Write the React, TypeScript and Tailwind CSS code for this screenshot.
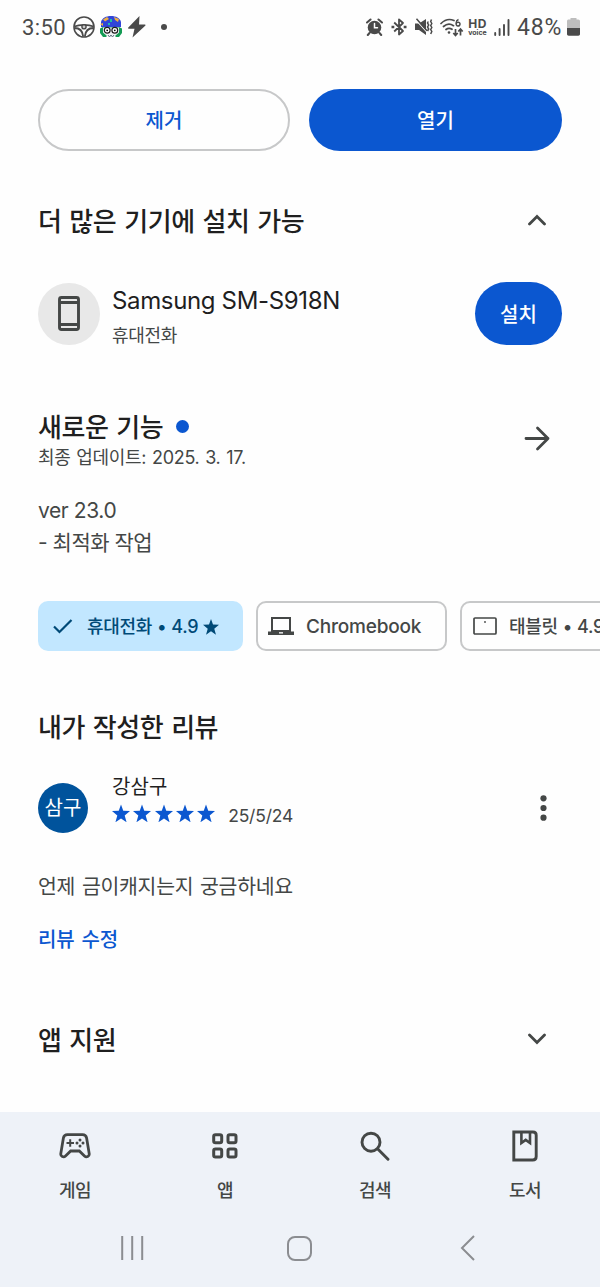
import type { ReactNode } from "react";

const KR = "font-['Noto_Sans_CJK_KR',sans-serif]";
const LATIN = "font-['Inter','Noto_Sans_CJK_KR',sans-serif]";
const STAR = "M12 18 5.800 22.300l2.100-7.600L2 9.900l7.500-.3L12 2.500l2.500 7.100 7.500.3-5.900 4.800 2.100 7.600z";

function StatusBar() {
  return (
    <header className="flex h-[54px] items-center pl-[22px] pr-[20px] text-[#4a4a4a]">
      <span className="w-[51px] pt-[2px] font-['Roboto',sans-serif] text-[22px] leading-[52px] tracking-[0.4px]">3:50</span>
      <svg className="h-[22px] w-[22px]" viewBox="0 0 22 22" fill="none" stroke="currentColor">
        <circle cx="11" cy="11" r="10" strokeWidth="1.600" />
        <path d="M1.500 10.500C5 8.800 8 8.800 11 8.800s6 0 9.500 1.700" strokeWidth="1.800" />
        <path d="M1.500 12c4 0 8 1.500 8.700 8.500M20.500 12c-4 0-8 1.500-8.700 8.500" strokeWidth="1.800" />
        <circle cx="11" cy="10.800" r="2.100" fill="#ccc" strokeWidth="1.400" />
      </svg>
      <svg className="ml-[5px] h-[22px] w-[22px]" viewBox="0 0 22 22">
        <path d="M0 12.500 3 11h16l3 1.500V17l-3 4h-3l-2-2H8l-2 2H3l-3-4z" fill="#149b54" />
        <path d="M1 11V6C2 2 6 0 11 0s9 2 10 6v5z" fill="#3145d8" />
        <path d="M3 3.500 7 1l2 2-4 2.500zM14 1l5 2-1 3-3-2zM0 8l3-1v3z" fill="#edae45" />
        <path d="M10 3h2v3h-2zM8 7h2v2H8z" fill="#21bda7" />
        <path d="M3 11.500h16v5l-4 3.500H7l-4-3.500z" fill="#f0f3f4" />
        <path d="m8 19 1.500 2L11 19l1.500 2 1.500-2" fill="none" stroke="#607080" />
        <circle cx="7.200" cy="14.300" r="2.900" fill="#fff" stroke="#1d1d1d" strokeWidth="1.200" />
        <circle cx="14.800" cy="14.300" r="2.900" fill="#fff" stroke="#1d1d1d" strokeWidth="1.200" />
        <circle cx="7.200" cy="14.300" r=".9" /><circle cx="14.800" cy="14.300" r=".9" />
      </svg>
      <svg className="ml-[6px] h-[22px] w-[18px]" viewBox="0 0 18 22" fill="currentColor">
        <path d="M11.500 0 .3 11.500c-.6.7-.3 1.300.5 1.300h5.700L4.500 21.500 17.200 9.800c.7-.7.400-1.300-.400-1.300H11z" />
      </svg>
      <span className="ml-[15px] h-[6px] w-[6px] rounded-full bg-[#4a4a4a]" />
      <div className="ml-auto flex items-center">
        <svg className="h-[18px] w-[17px]" viewBox="0 0 17 18" fill="none" stroke="currentColor" strokeLinecap="round">
          <circle cx="8.500" cy="9.500" r="6.800" fill="currentColor" stroke="none" />
          <path d="M1 4.500 4.500 1.500M16 4.500 12.500 1.500M3.500 15l-1.700 2M13.500 15l1.700 2" strokeWidth="2" />
          <path d="M8.500 5.500v4.300h3" stroke="#fff" strokeWidth="1.500" />
        </svg>
        <svg className="ml-[8px] h-[18px] w-[16px]" viewBox="0 0 16 18" fill="none" stroke="currentColor" strokeWidth="1.800">
          <path d="M3.200 4.500 12 13l-4 3.500v-15L12 5l-8.800 8.500" strokeLinejoin="round" />
          <path d="M.5 9h2.800M12.700 9h2.800" strokeWidth="2.300" />
        </svg>
        <svg className="ml-[8px] h-[18px] w-[18px]" viewBox="0 0 18 18" fill="none" stroke="currentColor">
          <path d="M0 5.500h4L11 1v16l-7-5H0z" fill="currentColor" stroke="none" />
          <path d="m0 .8 13 14.500" stroke="#fff" strokeWidth="1.200" />
          <path d="m1.500.8 10.500 12" strokeWidth="1.500" />
          <path d="m13.300 3.500-.8 1.500 1.200 2-1.200 2 1.200 2-1.200 2M16.500 1.500l-.8 2 1.100 2-1.100 2 1.100 2-1.100 2 1.100 2-1.100 2.500" strokeWidth="1.500" />
        </svg>
        <svg className="ml-[7px] h-[19px] w-[24px]" viewBox="0 0 24 19" fill="none" stroke="currentColor" strokeWidth="1.700">
          <path d="M1 5.500C5 1.500 10 .8 14 2.500M3.500 8.500c3-2.700 7-3 10-.8M6 11.500c2-1.600 4-1.600 6-.2" strokeLinecap="round" />
          <circle cx="9" cy="14.500" r="1.300" fill="currentColor" stroke="none" />
          <path d="M18.500 1.500c-3 1-3.200 6.500-.6 6.500 3 0 2.500-4 .2-3.800-1.300 0-2 .9-2 2" strokeWidth="1.500" />
          <path d="M15.500 11v6M13.300 15l2.200 2.500 2.200-2.500M20.500 17.500v-6M18.300 13.500l2.200-2.500 2.200 2.500" strokeWidth="1.700" />
        </svg>
        <span className="ml-[4px] flex w-[19px] flex-col items-center pt-[1px] font-['Inter',sans-serif] font-bold">
          <span className="text-[12px] leading-[10px] tracking-[0.4px]">HD</span>
          <span className="text-[7px] leading-[8px]">voice</span>
        </span>
        <svg className="ml-[7px] h-[17px] w-[16px]" viewBox="0 0 16 17" fill="none" stroke="currentColor" strokeWidth="1.900" strokeLinecap="round">
          <path d="M1.200 14v2M5.600 10v6M10 6v10M14.500 1v15" />
        </svg>
        <span className="ml-[7px] w-[50px] pt-[2px] font-['Roboto',sans-serif] text-[23px] leading-[52px] tracking-[0.8px]">48%</span>
        <svg className="h-[18px] w-[13px]" viewBox="0 0 13 18">
          <path d="M3.500 0h6v1.500h1.800c1 0 1.700.8 1.700 1.700V11H0V3.200c0-1 .7-1.700 1.700-1.700h1.800z" fill="#bdbdbd" />
          <path d="M0 10h13v6c0 1-.7 1.700-1.700 1.700H1.700C.7 17.700 0 17 0 16z" fill="#4a4a4a" />
        </svg>
      </div>
    </header>
  );
}

function Heading({ children, className = "" }: { children: ReactNode; className?: string }) {
  return <h2 className={`${KR} whitespace-nowrap text-[26px] font-medium leading-[38px] tracking-[-0.450px] text-[#1f1f1f] [word-spacing:2.500px] ${className}`}>{children}</h2>;
}

function Chevron({ up = false }: { up?: boolean }) {
  return (
    <svg className="mr-[16px] h-[12px] w-[18px]" viewBox="0 0 18 12" fill="none" stroke="#444746" strokeWidth="2.800" strokeLinecap="round">
      <path d={up ? "m1.500 10 7.500-7.500L16.500 10" : "M1.500 2 9 9.500 16.500 2"} />
    </svg>
  );
}

function NavItem({ label, children }: { label: string; children: ReactNode }) {
  return (
    <div className="flex w-[150px] flex-col items-center text-[#444746]">
      <div className="flex h-[40px] items-center">{children}</div>
      <span className={`${KR} mt-[11px] text-[18px] font-medium leading-[24px] tracking-[-0.500px]`}>{label}</span>
    </div>
  );
}

function BottomNav() {
  return (
    <footer className="mt-[53px] h-[175px] bg-[#eef2f8] pt-[14px]">
      <nav className="flex">
        <NavItem label="게임">
          <svg className="h-[26px] w-[32px]" viewBox="0 0 32 26" fill="none" stroke="currentColor">
            <path d="M8.500 1.700h15c2.200 0 3.700 1.300 4.100 3.400l2.600 15.500c.4 2.900-2.700 4.300-4.700 2.400L20.300 18h-8.600L6.500 23c-2 1.900-5.100.5-4.700-2.400L4.400 5.100c.4-2.100 1.900-3.400 4.100-3.400Z" strokeWidth="2.800" />
            <path d="M7.500 10h7.500M11.200 6.300v7.500" strokeWidth="2" />
            <g fill="currentColor" stroke="none"><circle cx="21" cy="7" r="1.500" /><circle cx="21" cy="13" r="1.500" /><circle cx="18" cy="10" r="1.500" /><circle cx="24" cy="10" r="1.500" /></g>
          </svg>
        </NavItem>
        <NavItem label="앱">
          <svg className="h-[26px] w-[26px]" viewBox="0 0 26 26" fill="none" stroke="currentColor" strokeWidth="3">
            <rect x="1.700" y="1.700" width="8" height="8" rx="1.800" /><rect x="16" y="1.700" width="8" height="8" rx="1.800" />
            <rect x="1.700" y="16" width="8" height="8" rx="1.800" /><rect x="16" y="16" width="8" height="8" rx="1.800" />
          </svg>
        </NavItem>
        <NavItem label="검색">
          <svg className="h-[30px] w-[30px]" viewBox="0 0 30 30" fill="none" stroke="currentColor" strokeWidth="2.900" strokeLinecap="round">
            <circle cx="11" cy="11.200" r="9" /><path d="M17.800 18 28 28.200" />
          </svg>
        </NavItem>
        <NavItem label="도서">
          <svg className="h-[32px] w-[26px]" viewBox="0 0 26 32" fill="none" stroke="currentColor" strokeWidth="2.900">
            <path d="M1.800 2h19.200q3.200 0 3.200 3.200v21.300q0 3.500-3.500 3.500H1.800z" />
            <path d="M9.400 2v11l4.300-3.100 4.300 3.100V2" strokeWidth="2.600" />
          </svg>
        </NavItem>
      </nav>
      <div className="mt-[34px] flex h-[26px] items-center pl-[121px] pr-[125px] text-[#8b8d91]">
        <svg className="h-[24px] w-[24px]" viewBox="0 0 24 24" stroke="currentColor" strokeWidth="2"><path d="M1.200 0v24M11.200 0v24M21.200 0v24" /></svg>
        <span className="ml-[142px] h-[25px] w-[25px] rounded-[8px] border-2 border-[#8b8d91]" />
        <svg className="ml-auto h-[26px] w-[15px]" viewBox="0 0 15 26" fill="none" stroke="currentColor" strokeWidth="2"><path d="M14 1 2 13l12 12" /></svg>
      </div>
    </footer>
  );
}

export default function App() {
  return (
    <div className="h-[1287px] w-[600px] overflow-hidden bg-[#fefefe]">
      <StatusBar />
      <main className="px-[38px]">
        <div className={`mt-[35px] flex h-[62px] gap-[19px] ${KR} text-[20px] font-medium`}>
          <button className="w-[252px] rounded-full border-2 border-[#c7c8c9] text-[#0b57d0]">제거</button>
          <button className="w-[253px] rounded-full bg-[#0b57d0] text-white">열기</button>
        </div>

        <div className="mt-[49px] flex h-[40px] items-center justify-between">
          <Heading>더 많은 기기에 설치 가능</Heading>
          <Chevron up />
        </div>
        <div className="mt-[42px] flex h-[63px] items-center">
          <div className="flex h-[62px] w-[62px] items-center justify-center rounded-full bg-[#e8e8e8]">
            <svg className="h-[35px] w-[22px]" viewBox="0 0 22 35" fill="none" stroke="#444746" strokeWidth="2.900">
              <rect x="1.500" y="1.500" width="19" height="32" rx="2" /><path d="M1.500 6.500h19M1.500 28.500h19" />
            </svg>
          </div>
          <div className="ml-[12px] flex flex-col">
            <span className={`${LATIN} pt-[3px] text-[24px] leading-[34px] tracking-[-0.350px] text-[#1f1f1f]`}>Samsung SM-S918N</span>
            <span className={`${KR} mt-[3px] text-[18px] leading-[26px] tracking-[-0.300px] text-[#444746]`}>휴대전화</span>
          </div>
          <button className={`${KR} ml-auto h-[63px] w-[87px] rounded-full bg-[#0b57d0] text-[20px] font-medium text-white`}>설치</button>
        </div>

        <div className="mt-[62px] flex h-[62px] items-center justify-between">
          <div>
            <div className="flex h-[38px] items-center">
              <Heading>새로운 기능</Heading>
              <span className="ml-[13px] h-[13px] w-[13px] rounded-full bg-[#0b57d0]" />
            </div>
            <p className={`${LATIN} whitespace-nowrap pt-[2px] text-[18px] leading-[22px] tracking-[-0.300px] text-[#444746] [word-spacing:1px]`}>최종 업데이트: 2025. 3. 17.</p>
          </div>
          <svg className="mr-[12px] h-[25px] w-[26px]" viewBox="0 0 26 25" fill="none" stroke="#444746" strokeWidth="2.800" strokeLinecap="round" strokeLinejoin="round">
            <path d="M2 12.500h22M13.500 2 24 12.500 13.500 23" />
          </svg>
        </div>
        <div className={`${LATIN} mt-[26px] h-[64px] text-[21px] leading-[32px] tracking-[-0.400px] text-[#444746]`}>
          <p>ver 23.0</p>
          <p className="tracking-[-0.500px]">- 최적화 작업</p>
        </div>

        <div className={`${LATIN} mr-[-38px] mt-[42px] flex h-[50px] gap-[13px] overflow-hidden text-[19px] font-medium text-[#444746]`}>
          <div className="flex w-[205px] shrink-0 items-center rounded-[10px] bg-[#c2e7ff] pl-[15px] text-[#004a77]">
            <svg className="h-[16px] w-[20px]" viewBox="0 0 20 16" fill="none" stroke="currentColor" strokeWidth="2.200"><path d="m1 8.500 5.500 5.500L18.500 2" /></svg>
            <span className="ml-[14px] whitespace-nowrap text-[18px] tracking-[-0.300px] [word-spacing:0.500px]">휴대전화 • 4.9</span>
            <svg className="ml-[5px] h-[17px] w-[16px]" viewBox="2 2 20 20" fill="currentColor"><path d={STAR} /></svg>
          </div>
          <div className="flex w-[191px] shrink-0 items-center rounded-[10px] border-2 border-[#c7c8c9] pl-[10px]">
            <svg className="h-[18px] w-[26px]" viewBox="0 0 26 18" fill="currentColor">
              <path fillRule="evenodd" d="M3 0h20v15H3zM5 2v11h16V2z" /><path d="M0 14.500h26V18H0z" /><path d="M11 15.200h4v1.300h-4z" fill="white" />
            </svg>
            <span className="ml-[12px] pt-[2px] tracking-[-0.200px]">Chromebook</span>
          </div>
          <div className="flex w-[205px] shrink-0 items-center rounded-[10px] border-2 border-[#c7c8c9] pl-[11px]">
            <svg className="h-[18px] w-[24px]" viewBox="0 0 24 18" fill="none" stroke="currentColor" strokeWidth="1.700"><rect x="1" y="1" width="22" height="16" rx="1" /><circle cx="12" cy="5" r=".9" fill="currentColor" stroke="none" /></svg>
            <span className="ml-[12px] whitespace-nowrap text-[18px] tracking-[-0.300px] [word-spacing:0.500px]">태블릿 • 4.9</span>
          </div>
        </div>

        <Heading className="mt-[56px] h-[40px]">내가 작성한 리뷰</Heading>
        <div className="mt-[26px] flex h-[60px] text-[#444746]">
          <div className={`${KR} flex h-[50px] w-[50px] items-center justify-center self-end rounded-full bg-[#00539c] pb-[2px] text-[20px] text-white`}>삼구</div>
          <div className="ml-[24px]">
            <div className={`${KR} text-[20px] leading-[26px] tracking-[0.100px] text-[#1f1f1f]`}>강삼구</div>
            <div className="mt-[1px] flex h-[26px] items-center">
              <div className="flex gap-[3.300px] text-[#0b57d0]">
                {[0, 1, 2, 3, 4].map((n) => (
                  <svg key={n} className="h-[18px] w-[18px]" viewBox="2 2 20 20" fill="currentColor"><path d={STAR} /></svg>
                ))}
              </div>
              <span className={`${LATIN} ml-[13px] pt-[6px] text-[17.500px] leading-[26px] tracking-[-0.200px]`}>25/5/24</span>
            </div>
          </div>
          <svg className="ml-auto mr-[15px] mt-[22px] h-[26px] w-[7px]" viewBox="0 0 7 26" fill="currentColor"><circle cx="3.500" cy="3.300" r="3.100" /><circle cx="3.500" cy="13" r="3.100" /><circle cx="3.500" cy="22.700" r="3.100" /></svg>
        </div>
        <p className={`${KR} mt-[37px] h-[32px] whitespace-nowrap text-[20.500px] leading-[30px] tracking-[-0.300px] text-[#444746] [word-spacing:2.500px]`}>언제 금이캐지는지 궁금하네요</p>
        <a className={`${KR} mt-[21px] block h-[32px] pt-[1px] text-[20px] font-medium leading-[30px] tracking-[-0.100px] text-[#0b57d0] [word-spacing:2.500px]`}>리뷰 수정</a>
        <div className="mt-[64px] flex h-[40px] items-center justify-between">
          <Heading>앱 지원</Heading>
          <Chevron />
        </div>
      </main>
      <BottomNav />
    </div>
  );
}
